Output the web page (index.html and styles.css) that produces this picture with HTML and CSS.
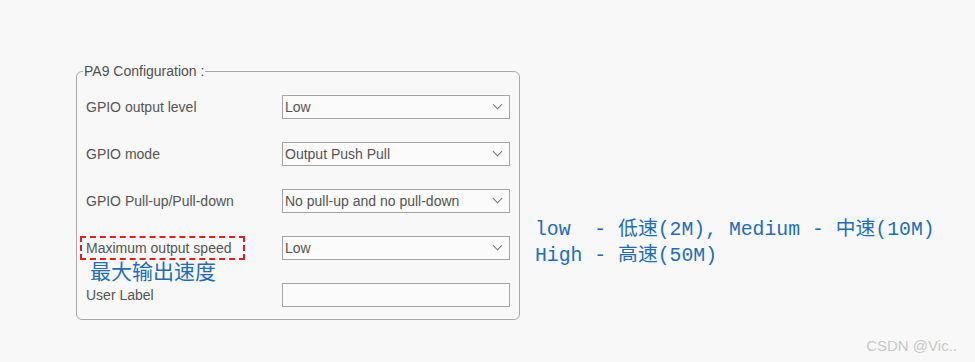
FILE: index.html
```html
<html lang="en">
  <head>
    <meta charset="UTF-8" />
    <meta name="viewport" content="width=device-width, initial-scale=1.0" />
    <title>PA9 Configuration</title>
    <link rel="stylesheet" href="styles.css">
  </head>
  <body>
    <div class="page">
      <fieldset class="config">
        <legend>PA9 Configuration :</legend>

        <div class="row">
          <span class="label">GPIO output level</span>
          <div class="select"><span>Low</span><i class="chevron"></i></div>
        </div>
        <div class="row">
          <span class="label">GPIO mode</span>
          <div class="select"><span>Output Push Pull</span><i class="chevron"></i></div>
        </div>
        <div class="row">
          <span class="label">GPIO Pull-up/Pull-down</span>
          <div class="select"><span>No pull-up and no pull-down</span><i class="chevron"></i></div>
        </div>
        <div class="row">
          <span class="label marked">
            Maximum output speed
            <span class="note">最大输出速度</span>
          </span>
          <div class="select"><span>Low</span><i class="chevron"></i></div>
        </div>
        <div class="row">
          <span class="label">User Label</span>
          <div class="select empty"></div>
        </div>
      </fieldset>

      <div class="speeds">
        <div>low&nbsp; - 低速(2M), Medium - 中速(10M)</div>
        <div>High - 高速(50M)</div>
      </div>
    </div>

    <div class="watermark">CSDN @Vic..</div>
  </body>
</html>
```

FILE: styles.css
```css
body {
  background-color: #f8f8f8;
  margin: 0;
  font-family: "Liberation Sans", Arial, sans-serif;
  color: #555;
  height: 362px;
  overflow: hidden;
  position: relative;
}

.page {
  display: flex;
  align-items: flex-start;
  padding-top: 63px;
  padding-left: 76px;
}

.config {
  width: 444px;
  box-sizing: border-box;
  margin: 0;
  padding: 4px 9px 0 9px;
  border: 1px solid #a9a9a9;
  border-radius: 6px;
  height: 257px;
}

.config legend {
  font-size: 14px;
  color: #505050;
  padding: 0 1px;
  margin-left: -3px;
}

.row {
  display: flex;
  align-items: center;
  justify-content: space-between;
  height: 47px;
}

.label {
  font-size: 14px;
  color: #555;
}

.marked {
  position: relative;
  margin-left: -6px;
  padding: 2px 11px 2px 4px;
  border: 2px dashed #e0201e;
}

.note {
  position: absolute;
  left: 8px;
  top: 22px;
  font-family: "Noto Sans CJK SC", sans-serif;
  font-size: 21px;
  line-height: 21px;
  color: #1f6db8;
  white-space: nowrap;
}

.select {
  width: 228px;
  height: 24px;
  box-sizing: border-box;
  border: 1px solid #a4a4a4;
  background-color: #fbfbfb;
  display: flex;
  align-items: center;
  justify-content: space-between;
  padding: 0 6px 0 2px;
  font-size: 14px;
  color: #555;
}

.chevron {
  width: 6px;
  height: 6px;
  border-right: 1px solid #777;
  border-bottom: 1px solid #777;
  transform: rotate(45deg);
  margin-top: -4px;
  margin-right: 2px;
}

.speeds {
  margin-left: 15px;
  margin-top: 154px;
  font-family: "Liberation Mono", "Noto Sans CJK SC", monospace;
  font-size: 19.8px;
  line-height: 26px;
  color: #1f6db8;
  white-space: nowrap;
}

.watermark {
  position: absolute;
  right: 18px;
  bottom: 8px;
  font-size: 15px;
  color: #c8c8c8;
}
```
